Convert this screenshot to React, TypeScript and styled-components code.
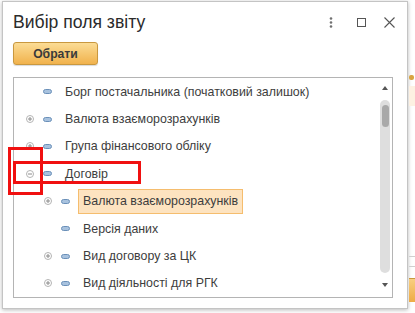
import React from "react";
import styled, { createGlobalStyle } from "styled-components";

const Global = createGlobalStyle`
  html, body { margin: 0; padding: 0; background: #ffffff; }
  body { font-family: "Liberation Sans", Arial, sans-serif; overflow: hidden; }
`;

const Page = styled.div`
  display: flex;
  align-items: flex-start;
  width: 415px;
  height: 313px;
  padding: 1px 0 0 2px;
  box-sizing: border-box;
  position: relative;
`;

const Dialog = styled.div`
  width: 406px;
  height: 308px;
  box-sizing: border-box;
  border: 1px solid #c4c4c4;
  background: #fff;
  box-shadow: 0 1px 4px rgba(0, 0, 0, 0.28);
  display: flex;
  flex-direction: column;
  flex-shrink: 0;
`;

const Header = styled.div`
  display: flex;
  align-items: center;
  padding: 8px 12px 0 10px;
  height: 24px;
`;

const Title = styled.div`
  flex: 1;
  font-size: 17.6px;
  line-height: 24px;
  color: #2b2b2b;
`;

const HeaderIcons = styled.div`
  display: flex;
  align-items: center;
  color: #606060;
`;

const IconSlot = styled.div<{ $gap: number }>`
  display: flex;
  margin-right: ${(p) => p.$gap}px;
`;

const ChooseButton = styled.button`
  margin: 8px 0 0 10px;
  width: 85px;
  height: 23px;
  box-sizing: border-box;
  border: 1px solid #c9983f;
  border-radius: 3px;
  background: linear-gradient(#fbdc95, #f1b24c);
  box-shadow: 0 1px 1px rgba(0, 0, 0, 0.15);
  font-family: "Liberation Sans", Arial, sans-serif;
  font-size: 12.2px;
  font-weight: bold;
  color: #3a3a3a;
  padding: 0;
  align-self: flex-start;
`;

const ListBox = styled.div`
  margin: 12px 0 0 10px;
  width: 380px;
  height: 221px;
  box-sizing: border-box;
  border: 1px solid #b4b4b4;
  display: flex;
  overflow: hidden;
`;

const Rows = styled.div`
  flex: 1;
  display: flex;
  flex-direction: column;
`;

const Row = styled.div<{ $level: number }>`
  display: flex;
  align-items: center;
  flex: 0 0 27.4px;
  height: 27.4px;
  padding-left: ${(p) => 12 + (p.$level - 1) * 18}px;
`;

const ExpanderSlot = styled.div`
  width: 8px;
  height: 8px;
  display: flex;
  margin-right: 9px;
`;

const FieldIconBox = styled.div`
  width: 9px;
  height: 5px;
  display: flex;
  margin-right: 8px;
`;

const Label = styled.div<{ $selected?: boolean }>`
  height: 25px;
  box-sizing: border-box;
  display: flex;
  align-items: center;
  padding: 0 4px;
  border: 1px solid ${(p) => (p.$selected ? "#f5bd6e" : "transparent")};
  background: ${(p) => (p.$selected ? "#fde3c0" : "transparent")};
  font-size: 12.4px;
  color: #3d3d3d;
  white-space: nowrap;
`;

const ScrollCol = styled.div`
  width: 12px;
  display: flex;
  flex-direction: column;
  align-items: center;
  padding-top: 8px;
  box-sizing: border-box;
`;

const Track = styled.div`
  margin-top: 10px;
  width: 10px;
  height: 173px;
  border-radius: 5px;
  background: #dedede;
  padding-top: 5px;
  box-sizing: border-box;
  display: flex;
  justify-content: center;
  margin-left: -2px;
`;

const Thumb = styled.div`
  width: 7px;
  height: 22px;
  border-radius: 4px;
  background: #a9a9a9;
`;

const ArrowDown = styled.div`
  margin-top: 10px;
  margin-left: -2px;
  display: flex;
`;

const ArrowUp = styled.div`
  margin-left: -2px;
  display: flex;
`;

const RightStrip = styled.div`
  flex: 1;
  height: 312px;
  display: flex;
  flex-direction: column;
  margin-left: 1px;
`;

const StripMark = styled.div`
  margin-top: 74px;
  height: 5px;
  width: 5px;
  background: #d9a441;
  border-radius: 2px;
`;

const StripBand = styled.div`
  margin-top: 6px;
  height: 20px;
  background: #fdf1e2;
`;

const StripLine = styled.div<{ $top: number }>`
  margin-top: ${(p) => p.$top}px;
  height: 1px;
  background: #cfcfcf;
`;

const StripButton = styled.div`
  margin-top: 11px;
  height: 23px;
  background: linear-gradient(#f8cf82, #eeab45);
  border-top: 1px solid #c9983f;
`;

const Annotation = styled.div<{ $l: number; $t: number; $w: number; $h: number }>`
  position: absolute;
  left: ${(p) => p.$l}px;
  top: ${(p) => p.$t}px;
  width: ${(p) => p.$w}px;
  height: ${(p) => p.$h}px;
  box-sizing: border-box;
  border: 3px solid #f01010;
  pointer-events: none;
`;

const Expander = ({ open }: { open?: boolean }) => (
  <svg width="8" height="8" viewBox="0 0 8 8">
    <circle cx="4" cy="4" r="3.5" fill="#fff" stroke="#b3b3b3" strokeWidth="1" />
    <line x1="2" y1="4" x2="6" y2="4" stroke="#8a8a8a" strokeWidth="1" />
    {!open && <line x1="4" y1="2" x2="4" y2="6" stroke="#8a8a8a" strokeWidth="1" />}
  </svg>
);

const FieldIcon = () => (
  <svg width="9" height="5" viewBox="0 0 9 5">
    <rect x="0.5" y="0.5" width="8" height="4" rx="2" fill="#a8c2de" stroke="#6b90b9" strokeWidth="1" />
  </svg>
);

type Item = { text: string; level: number; exp?: "plus" | "minus"; selected?: boolean };

const items: Item[] = [
  { text: "Борг постачальника (початковий залишок)", level: 1 },
  { text: "Валюта взаєморозрахунків", level: 1, exp: "plus" },
  { text: "Група фінансового обліку", level: 1, exp: "plus" },
  { text: "Договір", level: 1, exp: "minus" },
  { text: "Валюта взаєморозрахунків", level: 2, exp: "plus", selected: true },
  { text: "Версія даних", level: 2 },
  { text: "Вид договору за ЦК", level: 2, exp: "plus" },
  { text: "Вид діяльності для РГК", level: 2, exp: "plus" },
];

export default function App() {
  return (
    <>
      <Global />
      <Page>
        <Dialog>
          <Header>
            <Title>Вибір поля звіту</Title>
            <HeaderIcons>
              <IconSlot $gap={24}>
                <svg width="4" height="11" viewBox="0 0 4 11">
                  <circle cx="2" cy="1.5" r="1.3" fill="#707070" />
                  <circle cx="2" cy="5.5" r="1.3" fill="#707070" />
                  <circle cx="2" cy="9.5" r="1.3" fill="#707070" />
                </svg>
              </IconSlot>
              <IconSlot $gap={18}>
                <svg width="9" height="9" viewBox="0 0 9 9">
                  <rect x="0.5" y="0.5" width="8" height="8" fill="none" stroke="#555" strokeWidth="1" />
                </svg>
              </IconSlot>
              <IconSlot $gap={0}>
                <svg width="11" height="11" viewBox="0 0 11 11">
                  <path d="M0.5 0.5 L10.5 10.5 M10.5 0.5 L0.5 10.5" stroke="#555" strokeWidth="1.1" />
                </svg>
              </IconSlot>
            </HeaderIcons>
          </Header>
          <ChooseButton>Обрати</ChooseButton>
          <ListBox>
            <Rows>
              {items.map((it, i) => (
                <Row key={i} $level={it.level}>
                  <ExpanderSlot>{it.exp && <Expander open={it.exp === "minus"} />}</ExpanderSlot>
                  <FieldIconBox>
                    <FieldIcon />
                  </FieldIconBox>
                  <Label $selected={it.selected}>{it.text}</Label>
                </Row>
              ))}
            </Rows>
            <ScrollCol>
              <ArrowUp>
                <svg width="6" height="4" viewBox="0 0 6 4">
                  <path d="M0 4 L3 0 L6 4 Z" fill="#555" />
                </svg>
              </ArrowUp>
              <Track>
                <Thumb />
              </Track>
              <ArrowDown>
                <svg width="6" height="4" viewBox="0 0 6 4">
                  <path d="M0 0 L6 0 L3 4 Z" fill="#555" />
                </svg>
              </ArrowDown>
            </ScrollCol>
          </ListBox>
        </Dialog>
        <RightStrip>
          <StripMark />
          <StripBand />
          <StripLine $top={150} />
          <StripLine $top={9} />
          <StripButton />
        </RightStrip>
        <Annotation $l={8} $t={147} $w={35} $h={48} />
        <Annotation $l={13} $t={161} $w={128} $h={23} />
      </Page>
    </>
  );
}
